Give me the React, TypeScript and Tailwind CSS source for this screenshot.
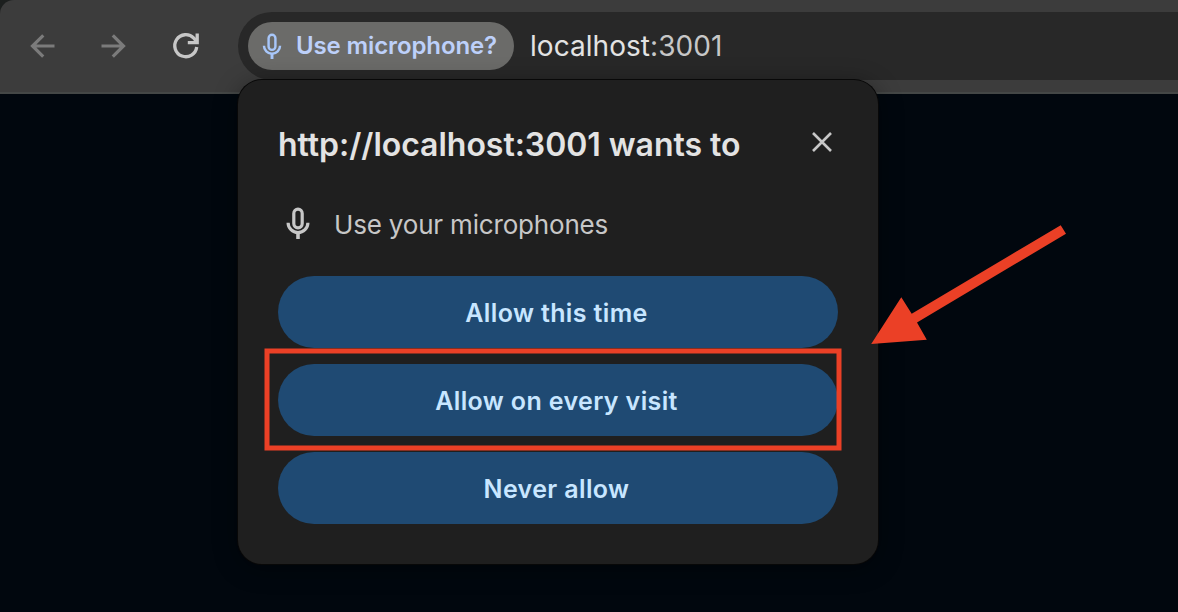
import React from "react";

function MicIcon({ className, width }: { className: string; width: number }) {
  return (
    <svg viewBox="0 0 24 32" className={className} fill="none" stroke="currentColor" strokeWidth={width}>
      <rect x="7.8" y="2.2" width="8.4" height="18.6" rx="4.2" />
      <path d="M2.1 15.7a9.9 9.9 0 0 0 19.8 0" />
      <path d="M12 25.5V32" strokeWidth="3.6" />
    </svg>
  );
}

function Toolbar() {
  return (
    <header className="flex h-[94px] items-start rounded-tl-[14px] border-b-2 border-[#444746] bg-[#3c3c3c] pt-3">
      <nav className="flex h-[68px] w-[238px] shrink-0 items-center pl-[26px]">
        <svg viewBox="0 0 32 32" className="h-8 w-8 text-[#7b7b7b]" fill="none" stroke="currentColor" strokeWidth="3.2">
          <path d="M17.3 5.3 6.5 16l10.7 10.7M6 16h22.5" />
        </svg>
        <svg viewBox="0 0 32 32" className="ml-[40px] h-8 w-8 text-[#7b7b7b]" fill="none" stroke="currentColor" strokeWidth="3.2">
          <path d="M14.8 5.3 25.5 16 14.8 26.7M26 16H3.5" />
        </svg>
        <svg viewBox="0 0 32 32" className="ml-[40px] h-8 w-8 text-[#c7c7c7]" fill="none" stroke="currentColor" strokeWidth="3.3">
          <path d="M26.7 17A11 11 0 1 1 23.8 8.2L27 11.8" />
          <path d="M27.2 3.5v9.1h-9.4" />
        </svg>
      </nav>
      <div className="flex h-[68px] grow items-center rounded-l-full bg-[#282828] pl-[10px]">
        <div className="flex h-12 w-[266px] items-center rounded-full bg-[#6b6b69] pl-[14px] text-[#bdd0fa]">
          <MicIcon className="h-[26px] w-[20px] text-[#a8c7fa]" width={3} />
          <span className="ml-[14px] whitespace-nowrap text-[24px] font-semibold leading-none tracking-[-0.12px]">Use microphone?</span>
        </div>
        <div className="ml-4 whitespace-nowrap text-[28px] leading-none tracking-[0.05px] text-[#e3e3e3]">
          localhost<span className="text-[#c7c7c7]">:3001</span>
        </div>
      </div>
    </header>
  );
}

function Choice({ label }: { label: string }) {
  return (
    <button className="flex h-[72px] w-full items-center justify-center rounded-full bg-[#1f4a73] pr-[3px] pt-0.5 text-[25px] font-semibold leading-none tracking-[0.37px] text-[#c8e6ff]">
      {label}
    </button>
  );
}

function PermissionPopup() {
  return (
    <section className="absolute left-[238px] top-[80px] h-[484px] w-[640px] rounded-[24px] bg-[#1f1f1f] px-10 shadow-[0_0_0_1px_#080808,0_4px_24px_rgba(0,0,0,0.4)]">
      <div className="flex h-[128px] items-center justify-between">
        <h1 className="mt-[2px] whitespace-nowrap text-[32px] font-semibold leading-none tracking-[-0.03px] text-[#e3e3e3]">http://localhost:3001 wants to</h1>
        <svg viewBox="0 0 20 20" className="mr-[6px] mt-[-4px] h-5 w-5 text-[#c7c7c7]" fill="none" stroke="currentColor" strokeWidth="2.6">
          <path d="m1 1 18 18M19 1 1 19" />
        </svg>
      </div>
      <div className="flex h-[34px] items-center text-[#c7c7c7]">
        <MicIcon className="mb-[4px] ml-2 h-8 w-6" width={3.2} />
        <p className="ml-6 whitespace-nowrap text-[26px] leading-none tracking-[-0.18px]">Use your microphones</p>
      </div>
      <div className="mt-[34px] flex flex-col gap-4">
        <Choice label="Allow this time" />
        <Choice label="Allow on every visit" />
        <Choice label="Never allow" />
      </div>
    </section>
  );
}

export default function App() {
  return (
    <div className="relative flex h-[612px] w-[1178px] flex-col overflow-hidden bg-[#1c1f1e] font-['Inter',sans-serif]">
      <Toolbar />
      <main className="grow bg-[#01070e]" />
      <PermissionPopup />
      <svg viewBox="0 0 1178 612" className="pointer-events-none absolute inset-0 h-full w-full">
        <rect x="267" y="351" width="572" height="97" fill="none" stroke="#eb4026" strokeWidth="5" />
        <path d="M871.2 344 901.3 297.2 911.7 313.8 1060.7 225.2 1066 233.8 917 322.5 926.8 339.8Z" fill="#eb4026" />
      </svg>
    </div>
  );
}
